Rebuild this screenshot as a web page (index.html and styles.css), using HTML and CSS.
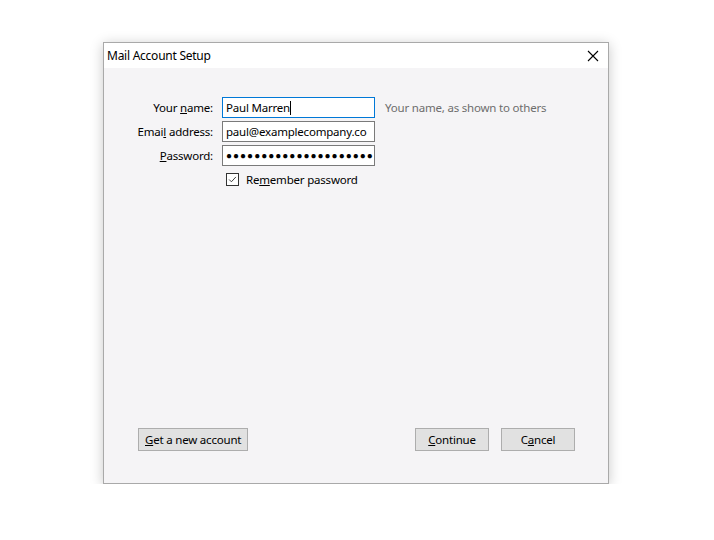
FILE: index.html
```html
<!DOCTYPE html>
<html lang="en">
<head>
<meta charset="UTF-8" />
<title>Mail Account Setup</title>
<link rel="stylesheet" href="styles.css">
</head>
<body>
<div class="dialog">
  <div class="titlebar">
    <span class="title">Mail Account Setup</span>
    <svg class="close" width="12" height="12" viewBox="0 0 12 12">
      <path d="M1 1L11 11M11 1L1 11" stroke="#000" stroke-width="1.1" fill="none" />
    </svg>
  </div>

  <div class="content">
    <div class="form">
      <div class="row">
        <label class="label">Your <u>n</u>ame:</label>
        <div class="field focused">Paul Marren<span class="caret"></span></div>
        <span class="hint">Your name, as shown to others</span>
      </div>
      <div class="row">
        <label class="label">Emai<u>l</u> address:</label>
        <div class="field">paul@examplecompany.co</div>
      </div>
      <div class="row">
        <label class="label"><u>P</u>assword:</label>
        <div class="field dots">●●●●●●●●●●●●●●●●●●●●●</div>
      </div>
      <div class="row check-row">
        <span class="checkbox">
          <svg width="13" height="13" viewBox="0 0 13 13">
            <path d="M2.5 6.5L5.2 9.2L10.5 3.5" stroke="#333" stroke-width="1.1" fill="none" />
          </svg>
        </span>
        <span class="check-label">Re<u>m</u>ember password</span>
      </div>
    </div>

    <div class="buttons">
      <button class="btn"><u>G</u>et a new account</button>
      <div class="right-buttons">
        <button class="btn wide"><u>C</u>ontinue</button>
        <button class="btn wide">C<u>a</u>ncel</button>
      </div>
    </div>
  </div>
</div>
</body>
</html>
```

FILE: styles.css
```css
body {
  margin: 0;
  background: #fff;
  font-family: "Noto Sans", "Open Sans", sans-serif;
  font-size: 11.5px;
  color: #000;
}
.dialog {
  width: 504px;
  height: 440px;
  margin: 42px 0 0 103px;
  border: 1px solid #a9a9a9;
  background: #f5f4f6;
  box-shadow: 0 2px 12px rgb(0 0 0 / 0.22);
  display: flex;
  flex-direction: column;
}
.titlebar {
  height: 25px;
  background: #fff;
  display: flex;
  align-items: center;
  justify-content: space-between;
  padding: 0 9px 0 3px;
}
.title {
  font-size: 12px;
  letter-spacing: -0.25px;
}
.content {
  flex: 1;
  display: flex;
  flex-direction: column;
  justify-content: space-between;
  padding: 29px 0 32px 0;
}
.form {
  display: flex;
  flex-direction: column;
  gap: 3px;
}
.row {
  display: flex;
  align-items: center;
  height: 21px;
}
.label {
  width: 109px;
  text-align: right;
  margin-right: 9px;
  color: #000;
  letter-spacing: -0.2px;
}
.field {
  width: 145px;
  height: 19px;
  border: 1px solid #7a7a7a;
  background: #fff;
  padding: 0 3px;
  line-height: 19px;
  white-space: nowrap;
  overflow: hidden;
  letter-spacing: -0.2px;
}
.field.focused {
  border-color: #0078d7;
}
.caret {
  display: inline-block;
  width: 1px;
  height: 14px;
  background: #000;
  vertical-align: -3px;
}
.dots {
  font-size: 10px;
  letter-spacing: 1px;
}
.hint {
  margin-left: 10px;
  color: #6d6d6d;
  letter-spacing: -0.2px;
}
.check-row {
  padding-left: 122px;
}
.checkbox {
  width: 11px;
  height: 11px;
  border: 1px solid #333;
  background: #fff;
  display: flex;
  align-items: center;
  justify-content: center;
  margin-right: 7px;
}
.checkbox svg {
  width: 11px;
  height: 11px;
}
.check-label {
  letter-spacing: -0.2px;
}
.buttons {
  display: flex;
  justify-content: space-between;
  padding: 0 33px 0 34px;
}
.right-buttons {
  display: flex;
  gap: 12px;
}
.btn {
  font-family: inherit;
  font-size: 11.5px;
  color: #000;
  height: 23px;
  padding: 0 6px 0 6px;
  background: #e1e1e1;
  border: 1px solid #adadad;
  letter-spacing: -0.2px;
}
.btn.wide {
  width: 74px;
}
```
